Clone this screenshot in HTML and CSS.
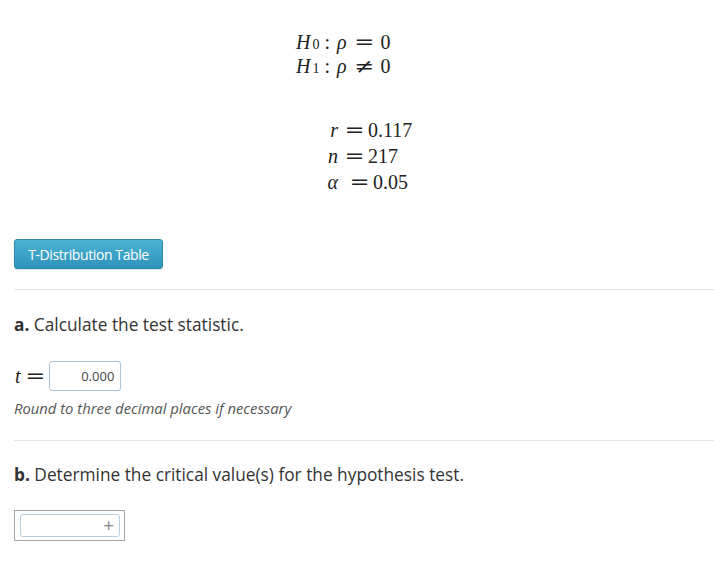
FILE: index.html
```html
<!DOCTYPE html>
<html>
<head>
<meta charset="utf-8">
<link rel="stylesheet" href="styles.css">
</head>
<body>
<div class="page">
  <div class="math hyp">
    <div class="mrow"><span class="mi">H</span><sub>0</sub><span class="colon">:</span><span class="mi rho">ρ</span><span class="rel">=</span><span>0</span></div>
    <div class="mrow"><span class="mi">H</span><sub>1</sub><span class="colon">:</span><span class="mi rho">ρ</span><span class="rel">≠</span><span>0</span></div>
  </div>
  <div class="math vals">
    <div class="lhs"><span class="mi">r</span></div><div class="rhs"><span class="rel2">=</span>0.117</div>
    <div class="lhs"><span class="mi">n</span></div><div class="rhs"><span class="rel2">=</span>217</div>
    <div class="lhs"><span class="mi">α</span></div><div class="rhs"><span class="rel2 wide">=</span>0.05</div>
  </div>
  <div class="btnrow"><button class="btn">T-Distribution Table</button></div>
  <hr class="sep">
  <section class="part">
    <p class="q"><b>a.</b> Calculate the test statistic.</p>
    <div class="answer">
      <span class="math tvar"><span class="mi">t</span><span class="rel">=</span></span>
      <span class="inbox">0.000</span>
    </div>
    <p class="hint">Round to three decimal places if necessary</p>
  </section>
  <hr class="sep sep2">
  <section class="part">
    <p class="q qb"><b>b.</b> Determine the critical value(s) for the hypothesis test.</p>
    <div class="outer"><div class="inner"><span class="plus">+</span></div></div>
  </section>
</div>
</body>
</html>
```
FILE: styles.css
```css
html, body { margin: 0; padding: 0; background: #fff; }
.page { padding: 0 0 0 14px; font-family: "Open Sans", sans-serif; color: #333; }
.math { font-family: "Liberation Serif", "DejaVu Serif", serif; font-size: 20px; color: #222; }
.mi { font-style: italic; }
.rel, .rel2 { font-family: "DejaVu Serif", serif; font-style: normal; display: inline-block; transform: scaleX(1.2); }
.hyp { padding-top: 30px; margin-left: 282px; line-height: 24px; }
.mrow { display: flex; align-items: baseline; }
.mrow sub { font-size: 14px; vertical-align: -3px; line-height: 0; margin-left: 2px; }
.colon { margin: 0 7px 0 5px; }
.hyp .rel { margin: 0 8px 0 9px; }
.vals { display: grid; grid-template-columns: 41px auto; margin-left: 283px; margin-top: 39px; line-height: 26px; width: 150px; }
.lhs { text-align: right; }
.rhs { white-space: nowrap; }
.rel2 { width: 17px; margin: 0 5px 0 8px; text-align: center; }
.rel2.wide { margin-left: 13px; }
.btnrow { margin-top: 44px; }
.btn { font-family: "Open Sans", sans-serif; font-size: 14px; letter-spacing: -0.4px; color: #fff; background: linear-gradient(#4db3d3, #2d93bb); border: 1px solid #2a88ad; border-radius: 3px; height: 30px; width: 149px; padding: 0; box-shadow: 0 1px 1px rgba(0,0,0,0.12); }
.sep { border: 0; border-top: 1px solid #e6e6e6; margin: 20px 0 0 0; }
.sep2 { margin-top: 23px; }
.q { margin: 24px 0 0 0; font-size: 17.3px; line-height: 22px; color: #333; }
.qb { margin-top: 23px; }
.q b { font-weight: 700; }
.answer { display: flex; align-items: center; margin-top: 25px; }
.tvar { display: flex; align-items: baseline; margin-left: 1px; }
.tvar .rel { margin: 0 6px 0 6px; }
.inbox { display: inline-block; width: 72px; height: 30px; box-sizing: border-box; border: 1px solid #aac4dc; border-radius: 3px; font-size: 13px; color: #444; text-align: right; padding-right: 6px; line-height: 28px; }
.hint { margin: 8px 0 0 0; font-size: 14.8px; font-style: italic; color: #555; line-height: 18px; }
.outer { margin-top: 24px; width: 111px; height: 31px; box-sizing: border-box; border: 1px solid #a5a5a5; padding: 3px 4px 3px 5px; }
.inner { height: 23px; box-sizing: border-box; border: 1px solid #b7cde0; border-radius: 3px; display: flex; justify-content: flex-end; align-items: center; padding-right: 5px; }
.plus { font-size: 19px; color: #888; line-height: 1; }
```
